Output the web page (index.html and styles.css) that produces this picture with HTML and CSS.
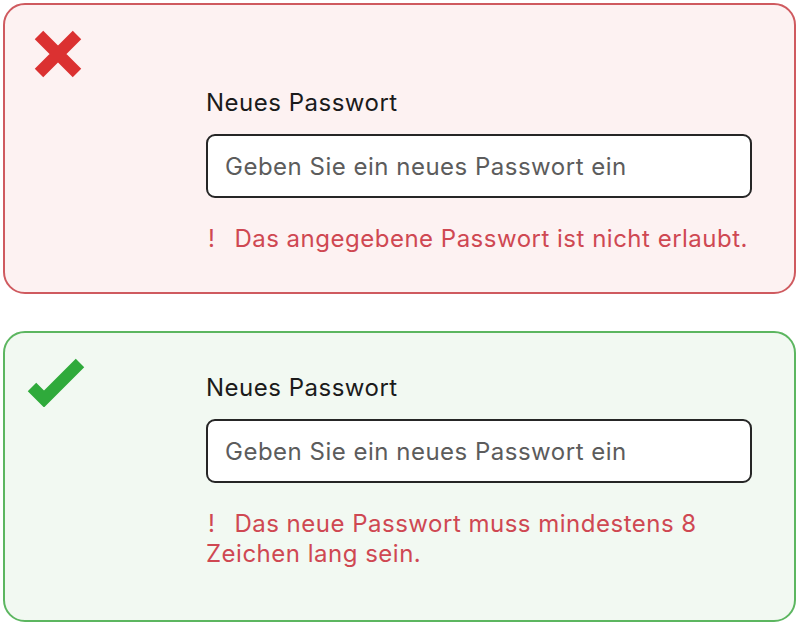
FILE: index.html
```html
<!DOCTYPE html>
<html lang="de">
<head>
    <meta charset="UTF-8">
    <meta name="viewport" content="width=device-width, initial-scale=1.0">
    <title>Neues Passwort</title>
    <link rel="stylesheet" href="styles.css">
</head>
<body>
    <div class="page">
        <!-- Ungültiges Passwort -->
        <div class="card card-error">
            <div class="card-icon">
                <svg width="50" height="50" viewBox="0 0 50 50">
                    <path d="M6 6 L44 44 M44 6 L6 44" stroke="#db3131" stroke-width="12" fill="none"/>
                </svg>
            </div>
            <div class="card-form">
                <label class="label" for="pw1">Neues Passwort</label>
                <input class="input" type="password" id="pw1" placeholder="Geben Sie ein neues Passwort ein">
                <p class="error"><span class="error-mark">!</span>Das angegebene Passwort ist nicht erlaubt.</p>
            </div>
        </div>

        <!-- Gültiges Passwort -->
        <div class="card card-success">
            <div class="card-icon">
                <svg width="60" height="50" viewBox="0 0 60 50">
                    <path d="M5 30 L17 42 L53 6" stroke="#2faa3b" stroke-width="12" fill="none"/>
                </svg>
            </div>
            <div class="card-form">
                <label class="label" for="pw2">Neues Passwort</label>
                <input class="input" type="password" id="pw2" placeholder="Geben Sie ein neues Passwort ein">
                <p class="error"><span class="error-mark">!</span>Das neue Passwort muss mindestens 8 Zeichen lang sein.</p>
            </div>
        </div>
    </div>
</body>
</html>
```

FILE: styles.css
```css
* {
    box-sizing: border-box;
}
body {
    font-family: Inter, "Noto Sans", Arial, sans-serif;
    background-color: #fff;
    margin: 0;
    padding: 0;
}
.page {
    display: flex;
    flex-direction: column;
    gap: 37px;
    padding: 3px 4px 3px 3px;
}
.card {
    display: grid;
    grid-template-columns: 179px 546px;
    height: 291px;
    padding: 24px 0 0 22px;
    border: 2px solid;
    border-radius: 22px;
}
.card-error {
    background-color: #fdf2f2;
    border-color: #cf5a5f;
}
.card-success {
    background-color: #f2f9f2;
    border-color: #5cb660;
}
.card-icon svg {
    display: block;
}
.card-error .card-icon {
    padding-left: 6px;
}
.card-error .card-form {
    padding-top: 59px;
}
.card-success .card-form {
    padding-top: 16px;
}
.label {
    display: block;
    font-size: 24px;
    line-height: 30px;
    letter-spacing: 0.5px;
    color: #1b1b1b;
}
.input {
    display: block;
    width: 100%;
    height: 64px;
    margin-top: 16px;
    padding: 0 17px;
    font-family: inherit;
    font-size: 24px;
    letter-spacing: 0.5px;
    color: #1b1b1b;
    background-color: #fff;
    border: 2px solid #262626;
    border-radius: 9px;
}
.input::placeholder {
    color: #5c5c5c;
}
.error {
    margin: 26px -12px 0 0;
    font-size: 24px;
    line-height: 30px;
    letter-spacing: 0.5px;
    color: #cf4852;
}
.error-mark {
    margin: 0 19px 0 2px;
}
```
